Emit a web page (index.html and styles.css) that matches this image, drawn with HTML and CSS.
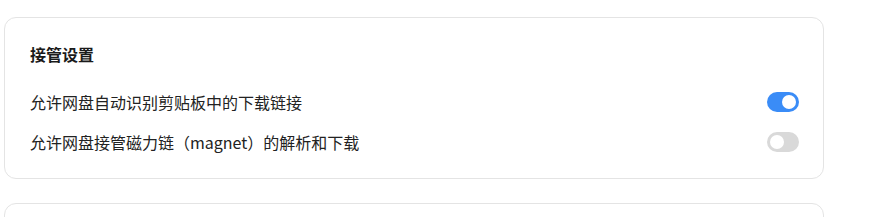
FILE: index.html
```html
<!DOCTYPE html>
<html lang="zh-CN">
<head>
    <meta charset="UTF-8">
    <title>设置</title>
    <link rel="stylesheet" href="styles.css">
</head>
<body>
<div class="page">
    <section class="card">
        <h3 class="card-title">接管设置</h3>
        <div class="row">
            <span class="label">允许网盘自动识别剪贴板中的下载链接</span>
            <span class="switch on"><i></i></span>
        </div>
        <div class="row">
            <span class="label">允许网盘接管磁力链（magnet）的解析和下载</span>
            <span class="switch"><i></i></span>
        </div>
    </section>
    <section class="card next"></section>
</div>
</body>
</html>
```
FILE: styles.css
```css
body {
    margin: 0;
    background-color: #fff;
    font-family: "Noto Sans CJK SC", "Noto Sans", sans-serif;
    color: #222;
    overflow: hidden;
}
.page {
    padding: 17px 0 0 4px;
    display: flex;
    flex-direction: column;
    gap: 24px;
}
.card {
    width: 820px;
    box-sizing: border-box;
    border: 1px solid #e4e4e4;
    border-radius: 12px;
    padding: 24px 24px 16px 25px;
}
.card.next {
    height: 80px;
}
.card-title {
    margin: 0 0 16px;
    font-size: 16px;
    line-height: 24px;
    font-weight: bold;
    color: #1a1a1a;
}
.row {
    height: 40px;
    display: flex;
    align-items: center;
    justify-content: space-between;
}
.label {
    font-size: 16px;
    line-height: 24px;
}
.switch {
    width: 32px;
    height: 20px;
    border-radius: 10px;
    background-color: #d9d9d9;
    display: flex;
    align-items: center;
    padding: 0 3px;
    box-sizing: border-box;
}
.switch i {
    width: 14px;
    height: 14px;
    border-radius: 50%;
    background-color: #fff;
}
.switch.on {
    background-color: #3a8cf7;
    justify-content: flex-end;
}
```
